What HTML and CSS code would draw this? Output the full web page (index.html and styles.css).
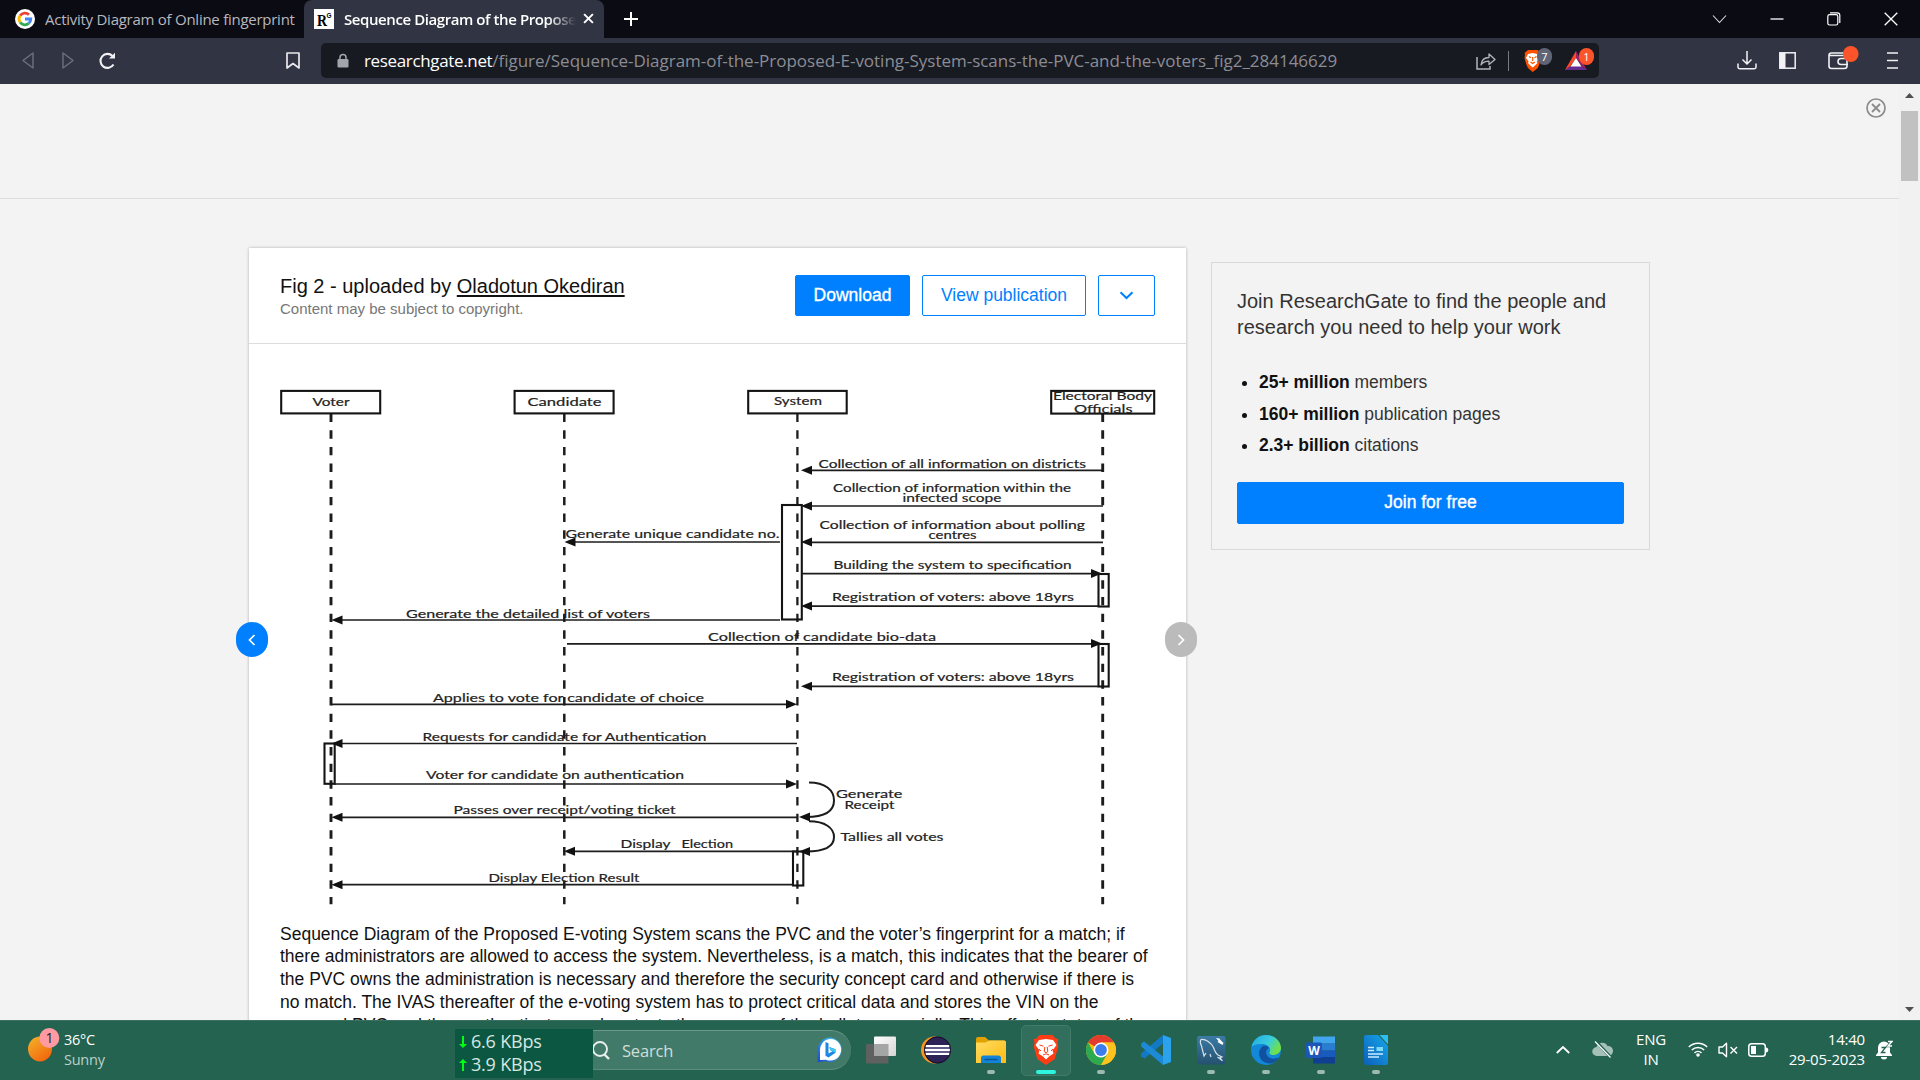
FILE: index.html
```html
<!DOCTYPE html>
<html lang="en">
<head>
<meta charset="utf-8">
<title>Sequence Diagram of the Proposed E-voting System</title>
<link rel="stylesheet" href="styles.css">
</head>
<body>
<div class="screen">
  <div class="tabs">
    <div class="tab">
      <svg class="fav" viewBox="0 0 20 20"><circle cx="10" cy="10" r="10" fill="#fff"/><g fill="none" stroke-width="2.8"><path d="M5.2 6.6A5.8 5.8 0 0 1 14 5.8" stroke="#ea4335"/><path d="M5.2 13.4a5.8 5.8 0 0 1 0-6.8" stroke="#fbbc05"/><path d="M13.8 14.3a5.8 5.8 0 0 1-8.6-.9" stroke="#34a853"/><path d="M10 10h5.8a5.8 5.8 0 0 1-2 4.3" stroke="#4285f4"/></g></svg>
      <span class="tab-title fit-a">Activity Diagram of Online fingerprint</span>
    </div>
    <div class="tab active">
      <svg class="fav" viewBox="0 0 20 20"><rect width="20" height="20" fill="#fff"/><text x="3" y="17" font-family="Liberation Serif" font-size="16" textLength="10" lengthAdjust="spacingAndGlyphs">R</text><text x="12.5" y="8.5" font-family="Liberation Sans" font-size="8" textLength="5" lengthAdjust="spacingAndGlyphs">G</text></svg>
      <span class="tab-title fit-b">Sequence Diagram of the Propose</span>
      <svg class="tab-x" viewBox="0 0 10 10"><path d="M1 1l8 8M9 1L1 9" stroke="#fff" stroke-width="1.8"/></svg>
    </div>
    <svg class="plus" viewBox="0 0 14 14"><path d="M7 0v14M0 7h14" stroke="#fff" stroke-width="2"/></svg>
    <div class="win">
      <svg width="15" height="14" viewBox="0 0 15 14"><path d="M1 3.5l6.5 7 6.5-7" fill="none" stroke="#ddd" stroke-width="1.1"/></svg>
      <svg width="14" height="14" viewBox="0 0 14 14"><path d="M.5 7h13" stroke="#fff" stroke-width="1.3"/></svg>
      <svg width="14" height="14" viewBox="0 0 14 14"><g fill="none" stroke="#fff" stroke-width="1.2"><rect x=".8" y="2.6" width="10" height="10.4" rx="1.8"/><path d="M3 .9h7.2a2.6 2.6 0 0 1 2.6 2.6V11"/></g></svg>
      <svg width="14" height="14" viewBox="0 0 14 14"><path d="M.7.7l12.6 12.6M13.3.7L.7 13.3" stroke="#fff" stroke-width="1.3"/></svg>
    </div>
  </div>

  <div class="toolbar">
    <svg class="t-back" viewBox="0 0 12 17"><path d="M11 1v15L1 8.5z" fill="none" stroke="#6d707d" stroke-width="1.4" stroke-linejoin="round"/></svg>
    <svg class="t-fwd" viewBox="0 0 12 17"><path d="M1 1v15l10-7.500z" fill="none" stroke="#6d707d" stroke-width="1.4" stroke-linejoin="round"/></svg>
    <svg class="t-rel" viewBox="0 0 18 18"><path d="M15.500 12.500A7 7 0 1 1 14.500 4" fill="none" stroke="#f2f2f5" stroke-width="2.100"/><path d="M11 6.500h6V.8z" fill="#f2f2f5"/></svg>
    <svg class="t-mark" viewBox="0 0 14 17"><path d="M1 1h12v15l-6-4.500L1 16z" fill="none" stroke="#e8e8ec" stroke-width="1.700" stroke-linejoin="round"/></svg>
    <div class="urlbar">
      <svg class="lock" viewBox="0 0 12 14"><path d="M3 6V4a3 3 0 0 1 6 0v2" fill="none" stroke="#a2a4ae" stroke-width="1.500"/><rect x=".5" y="5.500" width="11" height="8.500" rx="1.300" fill="#a2a4ae"/></svg>
      <span class="url"><b>researchgate.net</b>/figure/Sequence-Diagram-of-the-Proposed-E-voting-System-scans-the-PVC-and-the-voters_fig2_284146629</span>
      <svg class="share" viewBox="0 0 20 18"><path d="M1 5v12h13v-3" fill="none" stroke="#b4b5bc" stroke-width="1.500"/><path d="M5 13c.5-5 3-7.500 8-7.500V2l6 5.500-6 5V9.200c-3.500 0-6 .8-8 3.800z" fill="none" stroke="#b4b5bc" stroke-width="1.300" stroke-linejoin="round"/></svg>
      <i class="sep"></i>
      <svg class="shield" viewBox="0 0 29 24"><path d="M5 2h9.500l3 3-.4 2 .6 2.500c-1 6-2 9.500-3.500 11L9.700 24 5.500 20.500C4 19 2.500 14 1.500 9.500L2 7l-.4-2z" fill="#ff5000"/><path d="M5 6l4.700-1 4.600 1 2 4-2.500 3.500.7 1.500-2.500 2.500-2.300 2-2.400-2L5 15l.6-1.500L3 10z" fill="#fff"/><path d="M6 8.500l2 1.200M13.500 8.500l-2 1.200M9.700 9v4M7.500 14l2.200 1.500 2.200-1.500" stroke="#ff5000" stroke-width="1.200" fill="none"/><rect x="14" y="0" width="15" height="17" rx="7.500" fill="#606576"/><text x="21.500" y="12.500" font-size="11" fill="#fff" text-anchor="middle" font-family="Open Sans">7</text></svg>
      <svg class="bat" viewBox="0 0 30 24"><path d="M12 3L23 22l-5.500-4L12 10z" fill="#9e1f63"/><path d="M1 22h22l-5.500-4H6.500z" fill="#662d91"/><path d="M12 3L1 22l5.500-4L12 10z" fill="#ff4724"/><path d="M12 10l5.500 8.500h-11z" fill="#fff"/><rect x="15" y="0" width="15" height="17" rx="7.500" fill="#fb542b"/><text x="22.300" y="12.500" font-size="11" fill="#fff" text-anchor="middle" font-family="Open Sans">1</text></svg>
    </div>
    <svg class="t-down" viewBox="0 0 20 19"><path d="M10 0v12.500M5.500 8.500L10 13l4.500-4.500M1 12.500v3.500a1.800 1.800 0 0 0 1.800 1.800h14.400A1.800 1.800 0 0 0 19 16v-3.500" fill="none" stroke="#f2f2f5" stroke-width="1.500"/></svg>
    <svg class="t-side" viewBox="0 0 17 17"><rect x=".8" y=".8" width="15.400" height="15.400" fill="none" stroke="#f2f2f5" stroke-width="1.500"/><path d="M1 1h5.500v15H1z" fill="#f2f2f5"/></svg>
    <svg class="t-wal" viewBox="0 0 31 24"><g fill="none" stroke="#f2f2f5" stroke-width="1.600"><rect x="1" y="7" width="18" height="15.500" rx="2.500"/><path d="M1 9.500h18M20 12.500h-7a3 3 0 0 0 0 6h7"/></g><rect x="15" y="0" width="15.500" height="16" rx="7.700" fill="#fb542b"/></svg>
    <svg class="t-menu" viewBox="0 0 11 17"><path d="M0 1h11M0 8.500h11M0 16h11" stroke="#f2f2f5" stroke-width="1.500"/></svg>
  </div>

  <div class="view">
    <div class="page">
      <div class="ad"><svg viewBox="0 0 20 20"><circle cx="10" cy="10" r="9" fill="none" stroke="#8b8b8b" stroke-width="1.700"/><path d="M6 6l8 8M14 6l-8 8" stroke="#8b8b8b" stroke-width="1.800"/></svg></div>
      <div class="cols">
        <div class="card">
          <div class="head">
            <div class="who">
              <div class="fig">Fig 2 - uploaded by <u>Oladotun Okediran</u></div>
              <div class="copy">Content may be subject to copyright.</div>
            </div>
            <div class="btn solid dl">Download</div>
            <div class="btn vp">View publication</div>
            <div class="btn more"><svg viewBox="0 0 14 9"><path d="M1 1.300l6 5.700 6-5.700" fill="none" stroke="#0080ff" stroke-width="2"/></svg></div>
          </div>
          <svg class="diagram" viewBox="275 380 885 530">
            <defs><path id="l" d="M-1 0l11-4.500v9z"/><path id="r" d="M1 0l-11-4.500v9z"/></defs>
            <g class="life">
              <path d="M331 413.600V904.300" stroke-width="2.900"/><path d="M564.300 413.600V904.300" stroke-width="2.500"/><path d="M797.400 413.600V904.300" stroke-width="2.300"/><path d="M1102.700 413.600V904.300" stroke-width="2.900"/>
            </g>
            <g class="box">
              <rect x="281.200" y="390.900" width="99" height="22.500"/><rect x="514.600" y="390.900" width="99" height="22.500"/><rect x="748.200" y="390.900" width="98.500" height="22.500"/><rect x="1051.200" y="390.900" width="103" height="22.700"/>
              <rect x="782" y="505" width="19.800" height="114.500"/><rect x="1098.500" y="574" width="10.200" height="32.500"/><rect x="1098.500" y="644" width="10.200" height="42.500"/>
              <rect x="324.500" y="743.500" width="10.200" height="40.300"/><rect x="793" y="851.500" width="10.300" height="34"/>
            </g>
            <path class="msg" d="M1103.500 470.300H806M1103 506H806M1103 542.300H806M802 573.700h292M1098 606.200H806M780 542H570M780 620H338M567 643.800h527M1098 686.300H806M331 704.300h460M797 743.500H338M334 784h457M797 817.300H338M797 851.300H570M793 884.700H338"/>
            <path class="msg arc" d="M809 782.500C825 782.500 834 790 834 800.500S825 817 806 817M809 821.300C825 821.300 834 828 834 837S825 851.500 806 851.500"/>
            <g fill="#111">
              <use href="#l" x="802" y="470.300"/><use href="#l" x="802" y="506"/><use href="#l" x="802" y="542"/><use href="#l" x="802" y="606"/><use href="#l" x="802" y="686.300"/>
              <use href="#r" x="1101" y="573.500"/><use href="#r" x="1101" y="643.500"/><use href="#l" x="565.500" y="542"/><use href="#l" x="332.500" y="620"/><use href="#r" x="796" y="704.300"/>
              <use href="#l" x="332.500" y="743.500"/><use href="#r" x="796" y="784"/><use href="#l" x="332.500" y="817.300"/><use href="#l" x="800" y="817"/><use href="#l" x="565" y="851.300"/><use href="#l" x="800" y="851.500"/><use href="#l" x="332.500" y="884.700"/>
            </g>
            <g class="lbl">
              <text x="312.500" y="406" textLength="37" lengthAdjust="spacingAndGlyphs">Voter</text>
              <text x="527.500" y="406" textLength="74" lengthAdjust="spacingAndGlyphs">Candidate</text>
              <text x="774" y="405.400" textLength="48" lengthAdjust="spacingAndGlyphs">System</text>
              <text x="1053" y="399.700" textLength="99" lengthAdjust="spacingAndGlyphs">Electoral Body</text>
              <text x="1074" y="412.600" textLength="58.500" lengthAdjust="spacingAndGlyphs">Officials</text>
              <text x="818.500" y="468" textLength="267.500" lengthAdjust="spacingAndGlyphs">Collection of all information on districts</text>
              <text x="833" y="492" textLength="238" lengthAdjust="spacingAndGlyphs">Collection of information within the</text>
              <text x="902.500" y="502" textLength="99" lengthAdjust="spacingAndGlyphs">infected scope</text>
              <text x="819.500" y="529.200" textLength="265.500" lengthAdjust="spacingAndGlyphs">Collection of information about polling</text>
              <text x="928.500" y="539.300" textLength="48" lengthAdjust="spacingAndGlyphs">centres</text>
              <text x="833.500" y="569" textLength="238" lengthAdjust="spacingAndGlyphs">Building the system to specification</text>
              <text x="832" y="601.400" textLength="242" lengthAdjust="spacingAndGlyphs">Registration of voters: above 18yrs</text>
              <text x="565.500" y="537.600" textLength="214" lengthAdjust="spacingAndGlyphs">Generate unique candidate no.</text>
              <text x="406" y="617.500" textLength="244" lengthAdjust="spacingAndGlyphs">Generate the detailed list of voters</text>
              <text x="708" y="641" textLength="228" lengthAdjust="spacingAndGlyphs">Collection of candidate bio-data</text>
              <text x="832" y="681.400" textLength="242" lengthAdjust="spacingAndGlyphs">Registration of voters: above 18yrs</text>
              <text x="433" y="702.300" textLength="271" lengthAdjust="spacingAndGlyphs">Applies to vote for candidate of choice</text>
              <text x="422.500" y="741" textLength="284" lengthAdjust="spacingAndGlyphs">Requests for candidate for Authentication</text>
              <text x="426" y="779" textLength="258" lengthAdjust="spacingAndGlyphs">Voter for candidate on authentication</text>
              <text x="453.500" y="814.300" textLength="222" lengthAdjust="spacingAndGlyphs">Passes over receipt/voting ticket</text>
              <text x="620.500" y="848" textLength="50" lengthAdjust="spacingAndGlyphs">Display</text>
              <text x="681.500" y="848" textLength="51.500" lengthAdjust="spacingAndGlyphs">Election</text>
              <text x="488.500" y="882" textLength="151" lengthAdjust="spacingAndGlyphs">Display Election Result</text>
              <text x="836" y="798.400" textLength="66.500" lengthAdjust="spacingAndGlyphs">Generate</text>
              <text x="844.500" y="808.500" textLength="50" lengthAdjust="spacingAndGlyphs">Receipt</text>
              <text x="840.500" y="841.300" textLength="103" lengthAdjust="spacingAndGlyphs">Tallies all votes</text>
            </g>
          </svg>
          <div class="caption">
            <div>Sequence Diagram of the Proposed E-voting System scans the PVC and the voter’s fingerprint for a match; if</div>
            <div>there administrators are allowed to access the system. Nevertheless, is a match, this indicates that the bearer of</div>
            <div>the PVC owns the administration is necessary and therefore the security concept card and otherwise if there is</div>
            <div>no match. The IVAS thereafter of the e-voting system has to protect critical data and stores the VIN on the</div>
            <div>personal PVC and then authenticates and protects the secrecy of the ballots especially. This affects states of the</div>
          </div>
          <div class="nav prev"><svg viewBox="0 0 8 12"><path d="M6.500 1L1.500 6l5 5" fill="none" stroke="#fff" stroke-width="1.700"/></svg></div>
          <div class="nav next"><svg viewBox="0 0 8 12"><path d="M1.500 1l5 5-5 5" fill="none" stroke="#fff" stroke-width="1.700"/></svg></div>
        </div>
        <div class="join">
          <div class="jt"><span>Join ResearchGate to find the people and</span><span>research you need to help your work</span></div>
          <ul><li><b>25+ million</b> members</li><li><b>160+ million</b> publication pages</li><li><b>2.3+ billion</b> citations</li></ul>
          <div class="btn solid jb">Join for free</div>
        </div>
      </div>
    </div>
    <div class="scroll">
      <svg width="9" height="5" viewBox="0 0 9 5"><path d="M0 5L4.500 0 9 5z" fill="#505050"/></svg>
      <div class="thumb"></div>
      <svg class="dn" width="9" height="5" viewBox="0 0 9 5"><path d="M0 0l4.500 5L9 0z" fill="#505050"/></svg>
    </div>
  </div>

  <div class="taskbar">
    <svg class="sun" viewBox="0 0 32 34"><defs><linearGradient id="s" x1="0" y1="0" x2=".7" y2="1"><stop offset="0" stop-color="#f3b52b"/><stop offset="1" stop-color="#f2660c"/></linearGradient></defs><ellipse cx="12" cy="21" rx="12" ry="12.500" fill="url(#s)"/><ellipse cx="21.300" cy="10" rx="10" ry="10" fill="#ff9aa2"/><text x="21.500" y="15" font-size="14" text-anchor="middle" fill="#222" font-family="Open Sans">1</text></svg>
    <div class="wx"><span>36°C</span><span class="dim">Sunny</span></div>
    <div class="net"><div><svg viewBox="0 0 8 12"><path d="M3 0h2v8h3l-4 4-4-4h3z" fill="#0f1"/></svg><span>6.6 KBps</span></div><div><svg viewBox="0 0 8 12"><path d="M3 12h2V4h3L4 0 0 4h3z" fill="#0f1"/></svg><span>3.9 KBps</span></div></div>
    <div class="search">
      <svg class="mag" viewBox="0 0 17 19"><circle cx="7" cy="8" r="7" fill="none" stroke="#e8f0ed" stroke-width="1.900"/><path d="M11.500 13.500l4.500 4.500" stroke="#e8f0ed" stroke-width="2.400"/></svg>
      <span>Search</span>
      <svg class="bing" viewBox="0 0 26 26"><defs><linearGradient id="bg" x1="1" y1="0" x2="0" y2="1"><stop offset="0" stop-color="#46d3f5"/><stop offset="1" stop-color="#1b48c8"/></linearGradient></defs><path d="M13 .5A12.300 12.300 0 1 1 8 24.300L.7 25.300V13A12.300 12.300 0 0 1 13 .5z" fill="url(#bg)"/><path d="M13.500 2A10.800 10.800 0 1 1 9 22.700L3 23l0-9A10.800 10.800 0 0 1 13.500 2z" fill="#fff"/><path d="M8.500 5l3 1.200v10.300l4-2.200-2-1-1.300-3.300 6.300 2.300v3.500l-7 4.700-3-1.800z" fill="#1a86e6"/><path d="M12.200 10l6.300 2.300v3.500l-3-1.500-2-1z" fill="#3bc8ee"/></svg>
    </div>
    <div class="apps">
      <div class="app"><svg viewBox="0 0 30 30"><defs><linearGradient id="w" x1="0" y1="0" x2="1" y2="1"><stop offset="0" stop-color="#fff"/><stop offset="1" stop-color="#d5d5d5"/></linearGradient></defs><rect y="9" width="22.500" height="19.500" rx="1" fill="#5f6160"/><rect x="8" y="1.500" width="22" height="19.500" rx="1" fill="url(#w)"/><path d="M8 9h14.500v12H8z" fill="#a4a5a5"/></svg></div>
      <div class="app"><svg viewBox="0 0 30 30"><circle cx="13.500" cy="15" r="13.500" fill="#f7941e"/><circle cx="16.500" cy="15" r="13.400" fill="#2c2255"/><path d="M4 11h25M3.500 15h26M4 19h25" stroke="#fff" stroke-width="2"/><path d="M4 13h25M4 17h25" stroke="#9a93c4" stroke-width="1"/><circle cx="16.500" cy="15" r="13" fill="none" stroke="#161128"/></svg></div>
      <div class="app run"><svg viewBox="0 0 30 30"><defs><linearGradient id="f" x1="0" y1="0" x2="1" y2="1"><stop offset="0" stop-color="#ffdc62"/><stop offset="1" stop-color="#ffbb14"/></linearGradient></defs><path d="M0 4a2 2 0 0 1 2-2h7l4 3.500h15a2 2 0 0 1 2 2V12H0z" fill="#e2a100"/><path d="M0 7.500h9.500l4-2H28a2 2 0 0 1 2 2V28H0z" fill="url(#f)"/><path d="M5 28v-5a2.500 2.500 0 0 1 2.500-2.500h15A2.500 2.500 0 0 1 25 23v5z" fill="#1184d8"/><path d="M8.500 24.500h13" stroke="#0a5390" stroke-width="1.500"/></svg></div>
      <div class="app run on"><svg viewBox="0 0 30 30"><path d="M8.500 0h13l3 3.500 2.800.5-.8 4 .8 3.500-3.500 12.500L15 30l-8.800-6L2.700 11.500 3.500 8l-.8-4 2.800-.5z" fill="#ff3c14"/><path d="M8 5l7-1 7 1 3.500 5-4 5.500 1 3-4.500 3-3 3-3-3-4.500-3 1-3-4-5.500z" fill="#fff"/><path d="M8.500 10l4 1.200M21.500 10l-4 1.200M13.800 12l-.6 4.500 1.800 1.200 1.800-1.200-.6-4.500M8 14l2 2M22 14l-2 2M12 20l3-1.200 3 1.200" stroke="#ff3c14" stroke-width="1" fill="none"/></svg></div>
      <div class="app run"><svg viewBox="0 0 30 30"><circle cx="15" cy="15" r="15" fill="#fbbc04"/><path d="M15 15L2 7.500A15 15 0 0 1 28 7.500H15z" fill="#e33b2e"/><path d="M2 7.500A15 15 0 0 0 15 30l6.500-11.200L8.500 18.700z" fill="#2da94f"/><path d="M15 7.500h13a15 15 0 0 1-13 22.500l6.500-11.200z" fill="#fcc31e"/><circle cx="15" cy="15" r="7.400" fill="#fff"/><circle cx="15" cy="15" r="5.900" fill="#3b7ded"/></svg></div>
      <div class="app"><svg viewBox="0 0 30 30"><path d="M22 0l8 3v24l-8 3z" fill="#2aa3ec"/><path d="M22 0v8.500L3.500 23.500 0 21.500v-3z" fill="#1279c4"/><path d="M22 30v-8.500L3 6.500.2 8.500v3z" fill="#1c8ad6"/></svg></div>
      <div class="app run"><svg viewBox="0 0 30 30"><defs><linearGradient id="m" x1="0" y1="0" x2="0" y2="1"><stop offset="0" stop-color="#3b7ba6"/><stop offset="1" stop-color="#25516e"/></linearGradient></defs><rect x="1" y="1" width="28.500" height="28.500" rx="2" fill="url(#m)"/><path d="M7 17L5.500 11C4.500 9 4 6 5 4.500c5-.5 10 3 12.500 8 1 3 2.500 6 4.500 7.500l4 2-2 .8 2.500 3-5-3.800M7 17l1 4 2-3M14 19l1 3" fill="none" stroke="#d6e2ea" stroke-width="1.200"/><path d="M20 3l2.500 3-1 1 5 3 1-2-3-3-1-1.500z" fill="#fff"/></svg></div>
      <div class="app run"><svg viewBox="0 0 30 30"><defs><linearGradient id="e" x1="0" y1="0" x2="1" y2=".5"><stop offset="0" stop-color="#22a7e4"/><stop offset=".6" stop-color="#38cddc"/><stop offset="1" stop-color="#6fe04a"/></linearGradient></defs><circle cx="15" cy="15" r="15" fill="#1387d8"/><path d="M.5 12C2 4.500 8 0 15 0c9 0 15 6.500 15 13 0 4-3.500 7-7.500 7-3 0-4.500-1-4-2.500C20.500 14 18 9.500 12 9 7 8.700 2.500 9.500.5 12z" fill="url(#e)"/><path d="M12 11c-4 3-5 8-2.500 12.500 2 3.500 7 6 12 4.500 3-1 5-3 6.500-5.500-5 2.200-11 1.200-12.500-3C14.500 17 15.500 14 18 13c-1.500-2-4-2.700-6-2z" fill="#1051a0"/></svg></div>
      <div class="app run"><svg viewBox="0 0 30 30"><path d="M7 1.500h22v7H7z" fill="#41a5ee"/><path d="M7 8.500h22v7H7z" fill="#2b7cd3"/><path d="M7 15.500h22v6.500H7z" fill="#185abd"/><path d="M7 22h22v6.500H7z" fill="#103f91"/><rect y="7.500" width="16" height="15.500" rx="1.500" fill="#1b56b8"/><text x="8" y="19.500" font-family="Open Sans" font-weight="700" font-size="12" fill="#fff" text-anchor="middle">W</text></svg></div>
      <div class="app run"><svg viewBox="0 0 30 30"><defs><linearGradient id="o" x1="0" y1="1" x2="1" y2="0"><stop offset="0" stop-color="#0c5fb8"/><stop offset="1" stop-color="#16a8ee"/></linearGradient></defs><path d="M5 0h12l10 11v17a2 2 0 0 1-2 2H5a2 2 0 0 1-2-2V2a2 2 0 0 1 2-2z" fill="url(#o)"/><path d="M18.500 0H27v9.500z" fill="#2cc0f2"/><path d="M7 12.500h6M7 15.500h6M7 19h15M7 22h11" stroke="#c9ecff" stroke-width="1.300"/><rect x="15.500" y="12" width="6.500" height="4" fill="#7fd8f4"/></svg></div>
    </div>
    <div class="tray">
      <svg class="y-up" viewBox="0 0 14 8"><path d="M.8 7L7 1l6.200 6" fill="none" stroke="#fff" stroke-width="1.800"/></svg>
      <svg class="y-cl" viewBox="0 0 21 17"><path d="M5 15a4.500 4.500 0 0 1-.5-9A6 6 0 0 1 15.500 5a5 5 0 0 1 1 10z" fill="#a5c0b7"/><path d="M4 .5L18.500 16" stroke="#236350" stroke-width="3"/><path d="M3 .5L18.500 16.500" stroke="#fff" stroke-width="1.200"/></svg>
      <div class="lang"><span>ENG</span><span>IN</span></div>
      <svg class="y-wf" viewBox="0 0 20 16"><g fill="none" stroke="#fff" stroke-width="1.500"><path d="M.8 6a13 13 0 0 1 18.400 0M3.800 9a8.800 8.800 0 0 1 12.400 0M6.500 12a5 5 0 0 1 7 0"/></g><circle cx="10" cy="14" r="1.800" fill="#fff"/></svg>
      <svg class="y-sp" viewBox="0 0 20 16"><path d="M1 5h3.500L8.500 1.200v13.600L4.500 11H1z" fill="none" stroke="#fff" stroke-width="1.400" stroke-linejoin="round"/><path d="M12.500 5l6.500 6.500M19 5l-6.500 6.500" stroke="#fff" stroke-width="1.400"/></svg>
      <svg class="y-ba" viewBox="0 0 21 14"><rect x=".8" y=".8" width="16.500" height="12.400" rx="2.800" fill="none" stroke="#fff" stroke-width="1.500"/><rect x="3" y="3" width="5" height="8" fill="#fff"/><path d="M18 4.500c3 0 3 5 0 5z" fill="#fff"/></svg>
      <div class="clock"><span>14:40</span><span>29-05-2023</span></div>
      <svg class="y-be" viewBox="0 0 17 19"><path d="M8 1a6 6 0 0 1 6 6v5l2 2.500v1H0v-1L2 12V7a6 6 0 0 1 6-6zM5 16.500h6a3 2.500 0 0 1-6 0z" fill="#fff"/><path d="M5.500 7h4l-4 5h4" fill="none" stroke="#236350" stroke-width="1.300"/><path d="M12 1h4l-4 4.500H16" fill="none" stroke="#236350" stroke-width="2.600"/><path d="M12 1h4l-4 4.500H16" fill="none" stroke="#fff" stroke-width="1.400"/></svg>
    </div>
  </div>
</div>
</body>
</html>
```
FILE: styles.css
```css
* { box-sizing: border-box; }
body { margin: 0; overflow: hidden; background: #f3f3f3; font-family: "Liberation Sans", Arial, sans-serif; }
svg { display: block; flex: none; }
.screen { width: 1920px; height: 1080px; display: flex; flex-direction: column; overflow: hidden; }

.tabs { height: 38px; flex: none; background: #0b0b14; display: flex; align-items: center; font-family: "Open Sans", sans-serif; }
.tab { height: 38px; width: 304px; padding: 0 0 1px 15px; display: flex; align-items: center; color: #b8b8bd; }
.tab.active { width: 300px; padding-left: 10px; background: #313442; border-radius: 8px 8px 0 0; color: #fff; font-weight: 600; }
.fav { width: 20px; height: 20px; margin-right: 10px; }
.tab-title { white-space: nowrap; overflow: hidden; font-size: 15px; width: 256px; }
.fit-a { letter-spacing: -.26px; }
.fit-b { width: 232px; letter-spacing: -.42px; mask-image: linear-gradient(90deg, #000 88%, transparent); }
.tab-x { width: 11px; height: 11px; margin-left: 7px; }
.plus { width: 14px; height: 14px; margin-left: 20px; }
.win { margin-left: auto; margin-right: 22px; display: flex; gap: 43px; }

.toolbar { height: 46px; flex: none; background: #313442; display: flex; align-items: center; padding-bottom: 1px; }
.t-back { width: 12px; height: 17px; margin-left: 22px; }
.t-fwd { width: 12px; height: 17px; margin-left: 28px; }
.t-rel { width: 18px; height: 18px; margin-left: 24px; }
.t-mark { width: 14px; height: 17px; margin-left: 170px; }
.urlbar { width: 1278px; height: 35px; margin-left: 21px; border-radius: 5px; background: #181a22; display: flex; align-items: center; font-family: "Open Sans", sans-serif; }
.lock { width: 12px; height: 15px; margin-left: 16px; }
.url { width: 1112px; margin-left: 15px; font-size: 17px; color: #8b8d95; white-space: nowrap; letter-spacing: -.015px; }
.url b { color: #fff; font-weight: 400; letter-spacing: -.35px; }
.share { width: 20px; height: 18px; }
.sep { width: 1px; height: 20px; margin-left: 12px; background: #777983; }
.shield { width: 29px; height: 24px; margin: -2px 0 0 14px; }
.bat { width: 30px; height: 24px; margin: -2px 0 0 12px; }
.t-down { width: 20px; height: 19px; margin-left: 138px; }
.t-side { width: 17px; height: 17px; margin-left: 22px; }
.t-wal { width: 31px; height: 24px; margin: -6px 0 0 32px; }
.t-menu { width: 11px; height: 17px; margin-left: 28px; }

.view { height: 936px; flex: none; display: flex; overflow: hidden; }
.page { width: 1899px; background: #f3f3f3; overflow: hidden; }
.ad { height: 115px; border-bottom: 1px solid #ddd; display: flex; justify-content: flex-end; padding: 14px 13px 0 0; }
.ad svg { width: 20px; height: 20px; }
.cols { display: flex; align-items: flex-start; padding: 49px 0 0 249px; }
.card { position: relative; width: 937px; height: 800px; background: #fff; box-shadow: 0 0 3px rgba(0,0,0,.28); }
.head { height: 96px; border-bottom: 1px solid #ddd; padding: 27px 31px 0 31px; display: flex; }
.who { width: 515px; }
.fig { font-size: 20px; line-height: 24px; margin-top: -1px; color: #111; white-space: nowrap; }
.fig u { text-decoration-thickness: 1.5px; text-underline-offset: 2px; }
.copy { font-size: 15px; line-height: 22px; color: #777; white-space: nowrap; }
.btn { height: 41px; border: 1px solid #0080ff; border-radius: 2px; color: #0080ff; font-size: 17.5px; display: flex; align-items: center; justify-content: center; white-space: nowrap; }
.btn.solid { background: #0080ff; color: #fff; -webkit-text-stroke: .35px #fff; }
.dl { width: 115px; }
.vp { width: 164px; margin-left: 12px; }
.more { width: 57px; margin-left: 12px; }
.more svg { width: 15px; height: 9px; }
.diagram { width: 885px; height: 530px; margin: 36px 0 0 26px; }
.life { stroke: #1c1c1c; stroke-dasharray: 8.4 8.27; }
.box rect { fill: none; stroke: #141414; stroke-width: 2.1; }
.msg { fill: none; stroke: #1c1c1c; stroke-width: 1.7; }
.arc { stroke-width: 2; }
.lbl { font-family: Lato, sans-serif; font-size: 11.5px; fill: #222; stroke: #222; stroke-width: .2px; }
.caption { margin: 12.6px 0 0 31px; font-size: 17.5px; line-height: 22.75px; color: #111; white-space: nowrap; }
.nav { position: absolute; top: 374px; width: 32px; height: 35px; border-radius: 16px; background: #0080ff; display: flex; align-items: center; justify-content: center; }
.nav svg { width: 8px; height: 12px; }
.prev { left: -13px; }
.next { left: 916px; background: #bbb; }

.join { width: 439px; height: 288px; margin: 14px 0 0 25px; border: 1px solid #d9d9d9; padding: 25px 25px 0; color: #333; }
.jt { display: flex; flex-direction: column; font-size: 20px; line-height: 26px; white-space: nowrap; }
.join ul { margin: 27px 0 0; padding: 0 0 0 22px; font-size: 17.5px; line-height: 31.6px; letter-spacing: -.02px; }
.join b { color: #111; }
.join li::marker { color: #111; }
.jb { height: 42px; margin-top: 20.4px; padding-bottom: 2px; }

.scroll { width: 21px; background: #f1f1f1; display: flex; flex-direction: column; align-items: center; padding: 9px 0 8px; }
.thumb { width: 17px; height: 70px; margin-top: 13px; background: #c1c1c1; }
.dn { margin-top: auto; }

.taskbar { height: 60px; flex: none; background: #236350; border-top: 1px solid #3c7160; display: flex; align-items: flex-start; font-family: "Open Sans", sans-serif; color: #fff; }
.sun { width: 32px; height: 34px; margin: 7px 0 0 28px; }
.wx { width: 394px; padding: 9px 0 0 4px; display: flex; flex-direction: column; font-size: 14.5px; line-height: 20px; letter-spacing: -.25px; }
.dim { color: #bdd0ca; }
.net { width: 138px; height: 49px; margin: 8px 0 0 1px; background: #0b5742; padding: 1px 0 0 4px; font-size: 18px; line-height: 23px; letter-spacing: -.2px; color: #d8e6e1; }
.net div { display: flex; align-items: center; gap: 4px; }
.net svg { width: 8px; height: 12px; }
.search { width: 258px; height: 40px; margin-top: 9px; border-radius: 0 20px 20px 0; background: #427a69; border-top: 1px solid #6a978a; border-bottom: 1px solid #5a8b7c; display: flex; align-items: center; font-size: 16.5px; color: #d0deda; }
.mag { width: 17px; height: 19px; }
.search span { width: 207px; padding-left: 12px; letter-spacing: -.2px; }
.bing { width: 26px; height: 26px; }
.apps { display: flex; margin-left: 2px; }
.app { width: 55px; height: 59px; padding-top: 14px; display: flex; flex-direction: column; align-items: center; }
.app svg { width: 30px; height: 30px; }
.run::after { content: ""; width: 8px; height: 4px; margin-top: 5px; border-radius: 2px; background: #9dbab1; }
.on { margin: 4px 2px 0 3px; height: 51px; width: 50px; padding-top: 10px; background: #316e5c; border: 1px solid #437b6b; border-radius: 5px; }
.on svg { margin-top: -1px; }
.on::after { width: 20px; background: #2ef5e0; }
.tray { display: flex; margin-left: 153px; font-size: 15px; line-height: 20px; }
.lang, .clock { display: flex; flex-direction: column; align-items: center; padding-top: 8px; letter-spacing: -.2px; }
.y-up { width: 14px; height: 8px; margin-top: 25px; }
.y-cl { width: 21px; height: 17px; margin: 20px 0 0 22px; }
.lang { width: 30px; margin-left: 23px; }
.y-wf { width: 20px; height: 16px; margin: 20px 0 0 22px; }
.y-sp { width: 20px; height: 16px; margin: 21px 0 0 10px; }
.y-ba { width: 21px; height: 14px; margin: 22px 0 0 10px; }
.clock { width: 80px; margin-left: 16px; align-items: flex-end; }
.y-be { width: 17px; height: 20px; margin: 19px 0 0 11px; }
```
